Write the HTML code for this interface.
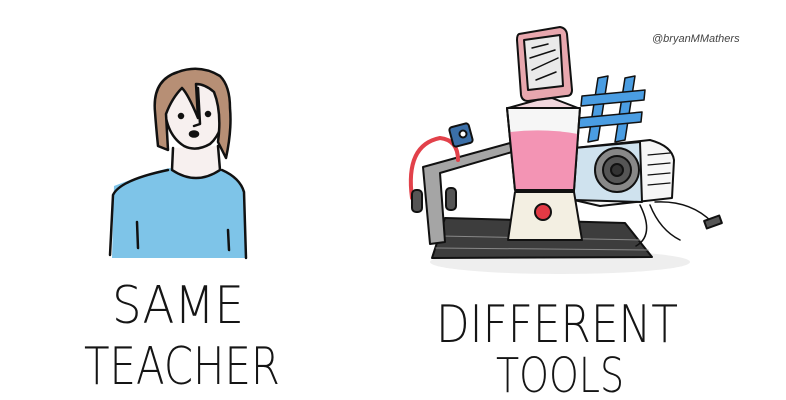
<!DOCTYPE html>
<html><head><meta charset="utf-8"><style>
html,body{margin:0;padding:0;background:#fff;}
svg{display:block}
text.t{font-family:"DejaVu Sans ExtraLight","DejaVu Sans","Liberation Sans",sans-serif;font-weight:200;fill:#151515}
</style></head><body>
<svg width="786" height="400" viewBox="0 0 786 400" xmlns="http://www.w3.org/2000/svg">
<!-- Person -->
<g stroke="#111" stroke-width="2.5" stroke-linejoin="round" stroke-linecap="round">
  <path d="M114 186 Q150 172 170 168 Q196 182 222 170 Q240 178 244 190 L246 258 L112 258 Z" fill="#7ec4e8" stroke="none"/>
  <path d="M110 255 L113 195 Q120 180 168 170 M222 170 Q240 178 244 192 L246 258" fill="none"/>
  <path d="M137 222 L138 248 M228 230 L229 250" fill="none"/>
  <path d="M173 148 L172 170 Q196 186 220 170 L218 146" fill="#f7f0ef"/>
  <path d="M165 100 Q166 76 195 74 Q222 78 224 104 Q224 132 210 144 Q196 152 184 146 Q168 136 165 112 Z" fill="#f7f0ef"/>
  <path d="M155 112 Q152 80 178 72 Q200 64 220 76 Q230 86 230 108 Q232 130 226 158 L218 142 Q222 112 214 92 Q205 84 196 84 L198 118 Q188 94 182 88 Q172 98 166 114 L168 150 L158 146 Q156 126 155 112 Z" fill="#b78f75"/>
  <circle cx="181" cy="116" r="2" fill="#111"/><circle cx="208" cy="114" r="2" fill="#111"/>
  <ellipse cx="194" cy="134" rx="4" ry="2.5" fill="#111"/>
  <path d="M198 88 L200 124 L194 126" fill="none"/>
</g>
<!-- Tools -->
<g stroke="#111" stroke-width="2" stroke-linejoin="round" stroke-linecap="round">
  <ellipse cx="560" cy="262" rx="130" ry="12" fill="#eee" stroke="none"/>
  <path d="M445 218 L625 223 L652 257 L432 258 Z" fill="#3d3d3d"/>
  <path d="M440 236 L640 240 M436 248 L648 250" stroke="#888" stroke-width="1"/>
  <path d="M423 167 L510 143 L512 152 L440 173 L445 242 L430 244 Z" fill="#a5a5a5"/>
  <path d="M412 198 Q405 145 440 138 Q458 140 458 160" fill="none" stroke="#e2414a" stroke-width="4"/>
  <rect x="412" y="190" width="10" height="22" rx="4" fill="#555"/>
  <rect x="446" y="188" width="10" height="22" rx="4" fill="#555"/>
  <rect x="451" y="125" width="20" height="20" rx="3" fill="#3b6fa8" transform="rotate(-15 461 135)"/>
  <circle cx="463" cy="134" r="3.5" fill="#fff"/>
  <path d="M574 148 L650 140 Q672 146 674 160 L672 198 L600 206 L574 200 Z" fill="#f6f6f6"/>
  <path d="M574 148 L640 142 L642 202 L574 200 Z" fill="#cfe2ee"/>
  <path d="M648 155 L670 153 M648 165 L670 163 M648 175 L670 173 M648 185 L670 183" stroke-width="1.2"/>
  <circle cx="617" cy="170" r="22" fill="#888"/>
  <circle cx="617" cy="170" r="14" fill="#555"/>
  <circle cx="617" cy="170" r="6" fill="#333"/>
  <path d="M655 202 Q690 200 712 222 M650 205 Q660 230 680 240 M640 205 Q655 235 636 246" fill="none" stroke-width="1.5"/>
  <rect x="705" y="218" width="16" height="8" fill="#555" transform="rotate(-20 713 222)"/>
  <g stroke="#111" stroke-width="1.5" fill="#4a9de2">
    <path d="M598 78 L608 76 L598 140 L588 142 Z"/>
    <path d="M625 78 L635 76 L625 140 L615 142 Z"/>
    <path d="M582 96 L645 90 L644 100 L581 106 Z"/>
    <path d="M579 118 L642 112 L641 122 L578 128 Z"/>
  </g>
  <path d="M519 34 L560 27 Q566 28 567 34 L572 90 Q572 96 566 96 L528 101 Q522 101 521 95 L517 40 Q517 35 519 34 Z" fill="#e8a7ae"/>
  <path d="M524 40 L560 35 L563 86 L528 90 Z" fill="#eaeaea"/>
  <path d="M532 48 L548 44 M530 58 L555 50 M532 70 L558 58 M536 80 L556 72" stroke-width="1.5"/>
  <path d="M537 100 L508 108 L578 108 L552 98 Z" fill="#f1d7dd"/>
  <path d="M507 108 L580 108 L574 190 L515 190 Z" fill="#f6f6f6"/>
  <path d="M510 132 Q545 128 578 134 L574 195 L515 195 Z" fill="#f394b4" stroke="none"/>
  <path d="M507 108 L580 108 L574 190 L515 190 Z" fill="none"/>
  <path d="M515 192 L574 192 L582 240 L508 240 Z" fill="#f3efe2"/>
  <circle cx="543" cy="212" r="8" fill="#e23a45"/>
</g>
<text x="652" y="42" font-size="11" font-style="italic" fill="#444" font-family="Liberation Sans, sans-serif">@bryanMMathers</text>
<text class="t" x="112" y="323" font-size="52" textLength="132" lengthAdjust="spacingAndGlyphs">SAME</text>
<text class="t" x="84" y="384" font-size="52" textLength="196" lengthAdjust="spacingAndGlyphs">TEACHER</text>
<text class="t" x="436" y="342" font-size="52" textLength="242" lengthAdjust="spacingAndGlyphs">DIFFERENT</text>
<text class="t" x="496" y="392" font-size="48" textLength="128" lengthAdjust="spacingAndGlyphs">TOOLS</text>
</svg>
</body></html>
